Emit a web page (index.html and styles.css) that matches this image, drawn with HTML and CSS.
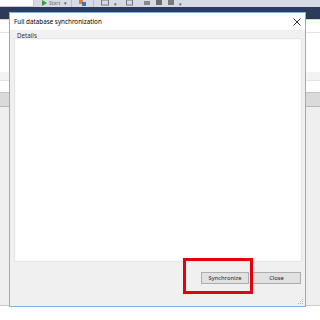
FILE: index.html
```html
<!DOCTYPE html>
<html>
<head>
<meta charset="utf-8">
<link rel="stylesheet" href="styles.css">
</head>
<body>
<div class="toolbar">
  <div class="combo"></div>
  <span class="tb-drop"></span>
  <svg class="tb-play" width="5" height="6" viewBox="0 0 5 6"><path d="M0 0 L5 3 L0 6 Z" fill="#3a9a3a"/></svg>
  <span class="tb-start">Start</span>
  <span class="tb-arrow">▾</span>
  <span class="tb-sep"></span>
  <svg class="tb-icon" width="7" height="6" viewBox="0 0 7 6"><rect x="0" y="0" width="4" height="4" fill="#d9822b"/><rect x="3" y="2" width="4" height="4" fill="#3b73b9"/></svg>
  <span class="tb-sep"></span>
  <svg class="tb-icon" width="8" height="6" viewBox="0 0 8 6"><rect x="0.5" y="0" width="7" height="5" fill="none" stroke="#777"/></svg>
  <span class="tb-arrow small">▾</span>
  <span class="tb-dot">·</span>
  <svg class="tb-icon" width="7" height="6" viewBox="0 0 7 6"><rect x="0.5" y="0" width="6" height="5" fill="none" stroke="#777"/></svg>
  <span class="tb-dot">·</span>
  <svg class="tb-icon" width="6" height="6" viewBox="0 0 6 6"><rect x="0" y="1" width="6" height="4" fill="#8a8a8a"/></svg>
  <svg class="tb-icon" width="6" height="6" viewBox="0 0 6 6"><rect x="0" y="0" width="6" height="5" fill="#6d6d6d"/></svg>
  <svg class="tb-icon" width="6" height="6" viewBox="0 0 6 6"><rect x="0" y="0" width="6" height="5" fill="#7a7a7a"/></svg>
  <span class="tb-arrow small">▾</span>
</div>
<div class="navband"></div>
<div class="tabline"></div>
<div class="doc">
  <div class="doc-line"></div>
  <div class="doc-strip"></div>
  <div class="doc-grid-head"></div>
  <div class="doc-grid"></div>
  <div class="doc-foot"></div>
</div>

<div class="dialog">
  <div class="dlg-title">
    <span class="dlg-title-text">Full database synchronization</span>
    <svg class="dlg-close" width="8" height="8" viewBox="0 0 8 8"><path d="M0.5 0.5 L7.5 7.5 M7.5 0.5 L0.5 7.5" stroke="#333" stroke-width="1"/></svg>
  </div>
  <div class="dlg-body">
    <div class="group-label">Details</div>
    <div class="details-box"></div>
    <div class="btn-row">
      <button class="btn">Synchronize</button>
      <button class="btn btn-close">Close</button>
    </div>
  </div>
  <svg class="grip" width="6" height="6" viewBox="0 0 6 6"><g fill="#b8b8b8"><rect x="4" y="0" width="1" height="1"/><rect x="2" y="2" width="1" height="1"/><rect x="4" y="2" width="1" height="1"/><rect x="0" y="4" width="1" height="1"/><rect x="2" y="4" width="1" height="1"/><rect x="4" y="4" width="1" height="1"/></g></svg>
</div>

<div class="highlight"></div>
</body>
</html>
```

FILE: styles.css
```css
html, body {
  margin: 0;
  padding: 0;
}
body {
  width: 320px;
  height: 320px;
  overflow: hidden;
  position: relative;
  background: #ffffff;
  font-family: "Noto Sans", "Liberation Sans", sans-serif;
}

/* ---- background IDE ---- */
.toolbar {
  height: 7px;
  background: #d5dae6;
  display: flex;
  align-items: flex-start;
  overflow: hidden;
}
.combo {
  width: 33px;
  height: 6px;
  background: #ffffff;
  border-right: 1px solid #c5cad6;
  border-bottom: 1px solid #c5cad6;
  flex: none;
}
.tb-drop {
  width: 6px;
  flex: none;
}
.tb-play {
  margin-left: 2px;
  flex: none;
}
.tb-start {
  margin-left: 2px;
  font-size: 5px;
  line-height: 6px;
  color: #6b6f78;
  flex: none;
}
.tb-arrow {
  font-size: 5px;
  line-height: 6px;
  color: #555;
  margin-left: 4px;
  flex: none;
}
.tb-arrow.small {
  margin-left: 2px;
  margin-top: 1px;
}
.tb-sep {
  width: 1px;
  height: 7px;
  background: #b6bccb;
  margin: 0 4px;
  flex: none;
}
.tb-icon {
  margin: 0 3px;
  flex: none;
}
.tb-dot {
  font-size: 6px;
  line-height: 6px;
  color: #9aa;
  margin: 0 2px;
  flex: none;
}
.navband {
  height: 12px;
  background: #2b3b58;
}
.tabline {
  height: 1px;
  background: #f2d58e;
}
.doc {
  display: flex;
  flex-direction: column;
}
.doc-line {
  height: 12px;
  border-bottom: 1px solid #e2e2e2;
}
.doc-strip {
  height: 47px;
  border-bottom: 1px solid #e2e2e2;
  background: linear-gradient(#ffffff 0, #ffffff 39px, #f3f3f3 39px);
}
.doc-grid-head {
  height: 13px;
  margin-top: 11px;
  background: #dadada;
  border-top: 1px solid #c4c4c4;
  border-bottom: 1px solid #b8b8b8;
}
.doc-grid {
  height: 198px;
  background: #efefef;
  border-bottom: 1px solid #cccccc;
}
.doc-foot {
  height: 20px;
  background: #ffffff;
}

/* ---- dialog ---- */
.dialog {
  position: absolute;
  left: 9px;
  top: 12px;
  width: 295px;
  height: 293px;
  border: 1px solid #86aee0;
  background: #f0f0f0;
  display: flex;
  flex-direction: column;
}
.dlg-title {
  height: 17px;
  background: #ffffff;
  display: flex;
  align-items: center;
  padding: 0 4px 0 4px;
  flex: none;
}
.dlg-title-text {
  flex: 1;
  font-size: 6.3px;
  color: #000;
}
.dlg-close {
  flex: none;
}
.dlg-body {
  flex: 1;
  display: flex;
  flex-direction: column;
  padding: 2px 5px 22px 6px;
}
.group-label {
  font-size: 6.2px;
  line-height: 8px;
  color: #333;
  padding-left: 1px;
  height: 8px;
}
.details-box {
  flex: 1;
  background: #ffffff;
  box-shadow: 0 0 0 1px #fafafa, 0 0 0 2px #e6e6e6;
}
.btn-row {
  display: flex;
  justify-content: flex-end;
  gap: 3px;
  margin-top: 12px;
  margin-right: -1px;
}
.btn {
  height: 12px;
  width: 48px;
  padding: 0;
  margin: 0;
  border: 1px solid #adadad;
  background: #e1e1e1;
  font-family: "Noto Sans", "Liberation Sans", sans-serif;
  font-size: 5.8px;
  color: #222;
  line-height: 10px;
}
.btn-close {
  width: 49px;
}
.grip {
  position: absolute;
  right: 1px;
  bottom: 1px;
}

/* ---- annotation ---- */
.highlight {
  position: absolute;
  left: 183px;
  top: 258px;
  width: 70px;
  height: 36px;
  box-sizing: border-box;
  border: 3px solid #e2000c;
}
```
